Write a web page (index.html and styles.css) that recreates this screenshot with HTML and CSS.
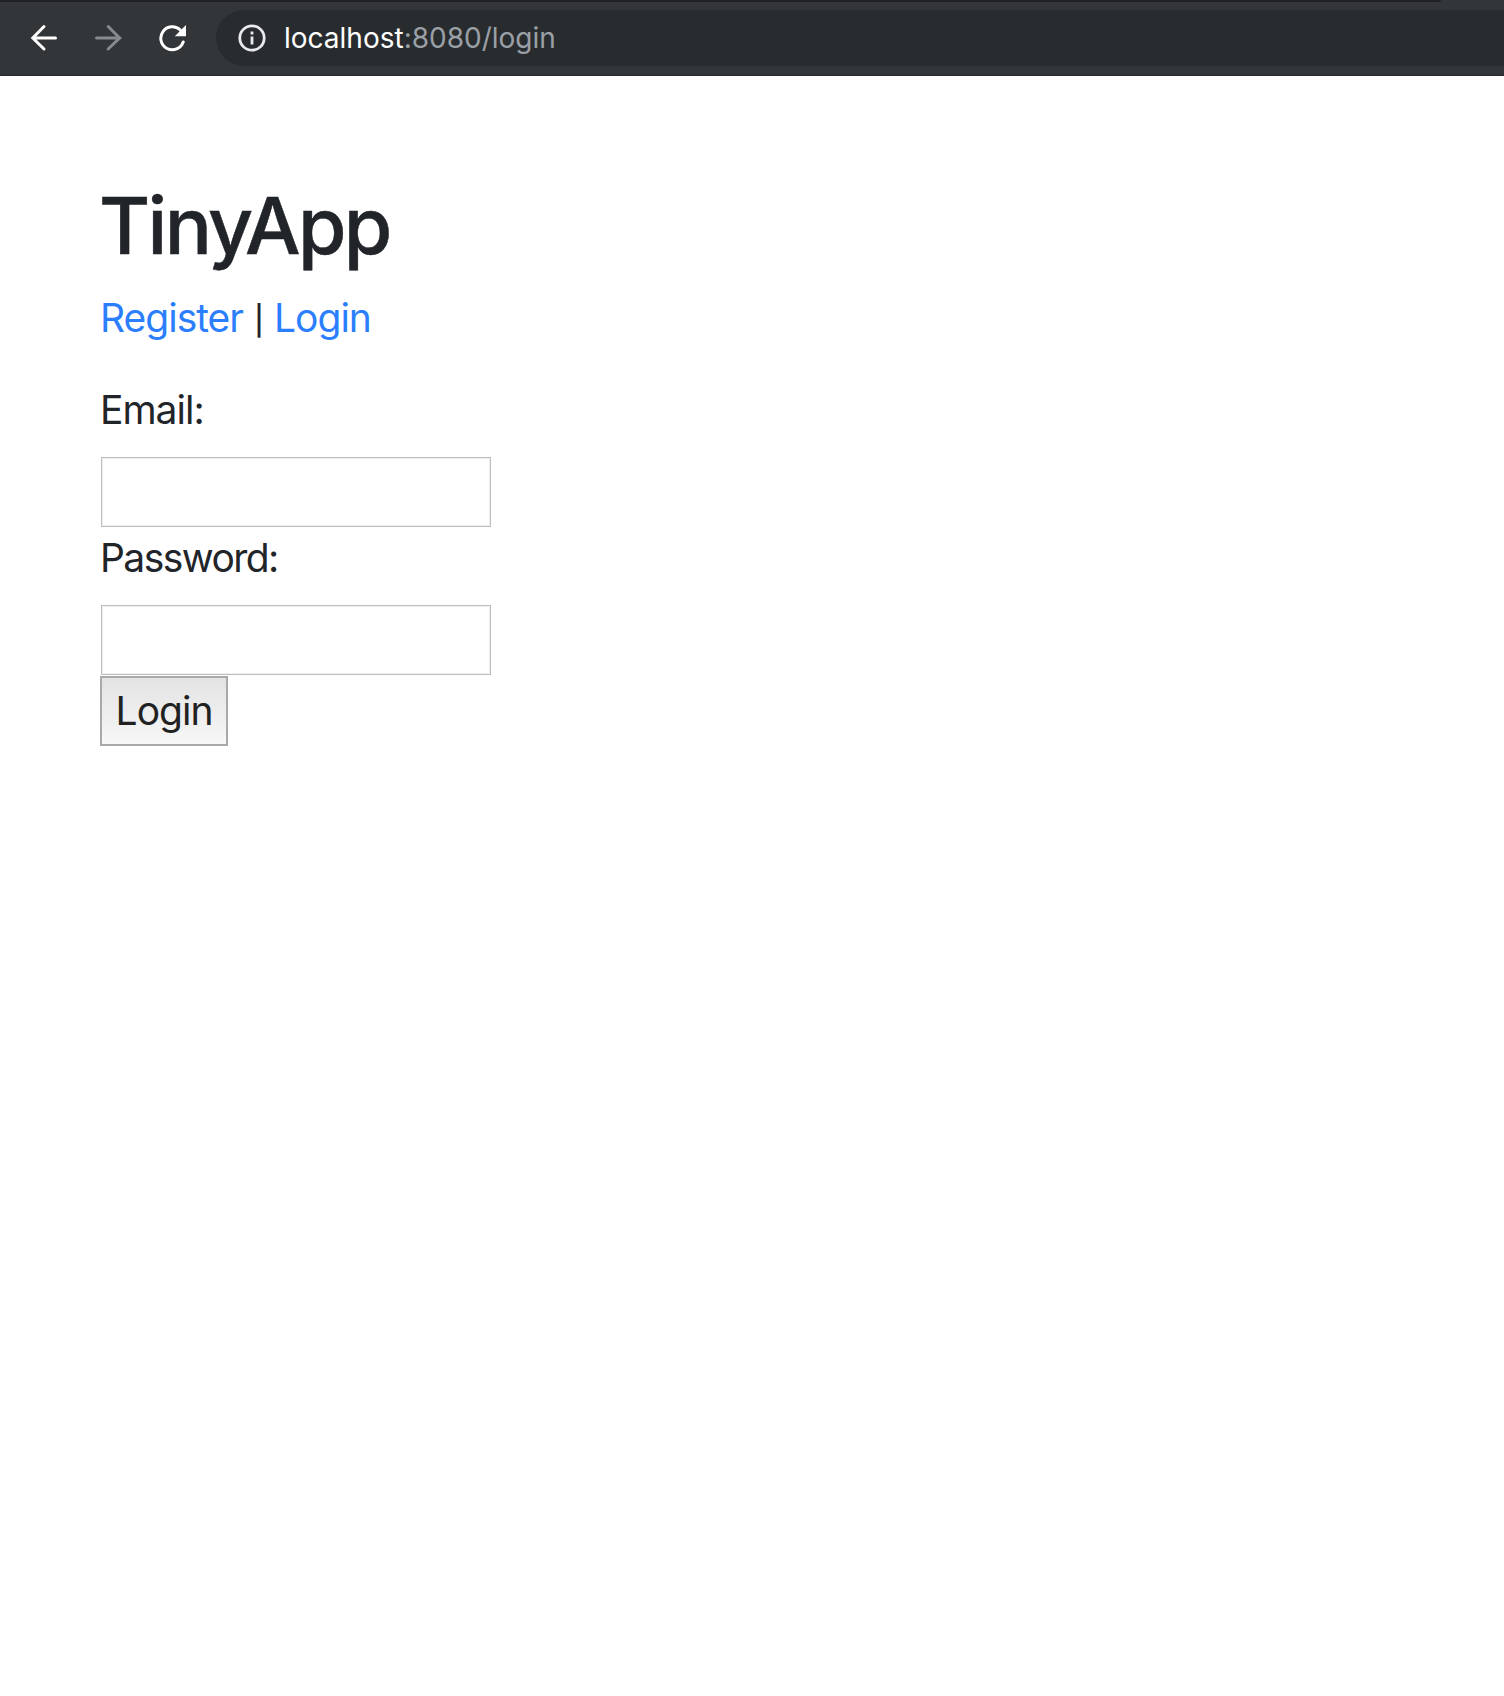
FILE: index.html
```html
<!DOCTYPE html>
<html lang="en">
<head>
<meta charset="utf-8">
<title>TinyApp</title>
<link rel="stylesheet" href="styles.css">
</head>
<body>
<header class="browser">
  <div class="tab-edge"></div>
  <div class="toolbar">
    <svg class="icon back" width="28" height="28" viewBox="0 0 28 28"><path d="M25.5 14H3M14 2.5 2.8 14 14 25" /></svg>
    <svg class="icon forward" width="28" height="28" viewBox="0 0 28 28"><path d="M1.5 14H25M13.2 2.5 24.6 14 13.2 25" /></svg>
    <svg class="icon reload" width="28" height="28" viewBox="0 0 28 28"><path d="M24.2 18A11.5 11.5 0 1 1 21.3 6" /><path class="head" d="M27 1V12.2H15.8Z" /></svg>
    <div class="address">
      <svg class="info" width="28" height="28" viewBox="0 0 28 28"><circle cx="14" cy="14" r="12.2" /><path d="M14 12.5V20.5M14 7.5V10.5" /></svg>
      <div class="url"><span class="host">localhost</span><span class="path">:8080/login</span></div>
    </div>
  </div>
</header>
<main class="page">
  <h1 class="title">TinyApp</h1>
  <nav class="nav"><a class="link" href="#">Register</a><span class="bar">|</span><a class="link" href="#">Login</a></nav>
  <form class="form">
    <label class="label" for="email">Email:</label>
    <input class="field" id="email" type="email">
    <label class="label password" for="password">Password:</label>
    <input class="field" id="password" type="password">
    <button class="submit" type="button">Login</button>
  </form>
</main>
</body>
</html>
```
FILE: styles.css
```css
* { box-sizing: border-box; }
body {
  margin: 0;
  min-height: 1696px;
  background: #fff;
  color: #212529;
  font: 39px/60px Inter, "Liberation Sans", sans-serif;
  letter-spacing: -1px;
}
.browser {
  height: 76px;
  background: #323639;
  border-bottom: 1px solid #2b2529;
}
.tab-edge {
  width: 1441px;
  height: 2px;
  background: #202124;
  border-bottom-right-radius: 4px 2px;
}
.toolbar {
  display: flex;
  align-items: center;
  height: 72px;
  padding-left: 30px;
}
.icon { flex: none; fill: none; stroke: #fff; stroke-width: 3; stroke-linecap: round; }
.back { margin-right: 37px; }
.forward { margin-right: 36px; stroke: #888b8d; }
.reload { margin-right: 29px; }
.reload .head { fill: #fff; stroke: none; }
.address {
  display: flex;
  align-items: center;
  flex: 1;
  height: 56px;
  padding-left: 22px;
  background: #292c2f;
  border-radius: 28px 0 0 28px;
}
.info { flex: none; fill: none; stroke: #e8eaed; stroke-width: 2.8; margin-right: 18px; }
.url { font-size: 28px; line-height: 56px; letter-spacing: 0; white-space: nowrap; }
.host { color: #fff; }
.path { color: #9aa0a6; }
.page { padding: 102px 100px 0; }
.title {
  margin: 0 0 14px -1px;
  font-size: 78.5px;
  line-height: 96px;
  font-weight: 500;
  letter-spacing: -2.7px;
  -webkit-text-stroke: 0.5px #212529;
}
.nav { display: flex; height: 60px; margin-bottom: 32px; }
.link { color: #2b7fff; text-decoration: none; }
.bar {
  margin: 0 11px;
  font-size: 29px;
  font-weight: 500;
  line-height: 65px;
}
.form { display: flex; flex-direction: column; align-items: flex-start; }
.label { margin-bottom: 17px; }
.field {
  width: 390px;
  height: 70px;
  margin: 0 0 0 1px;
  border: 1px solid #bebebe;
  box-shadow: inset 0 0 0 1px #eee;
  background: #fff;
  outline: 0;
}
.password {
  margin: 1px 0 17px;
  letter-spacing: -1.55px;
}
.submit {
  width: 128px;
  height: 70px;
  margin-top: 1px;
  padding: 0 0 1px;
  border: 2px solid #a9a9a9;
  background: linear-gradient(#e3e3e3, #f7f7f7);
  color: #212121;
  font: inherit;
  letter-spacing: inherit;
}
```
